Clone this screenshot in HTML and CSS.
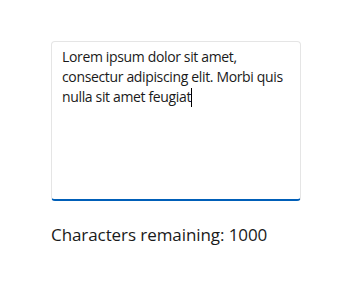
FILE: index.html
```html
<!DOCTYPE html>
<html lang="en">
	<head>
		<meta charset="UTF-8">
		<title>Text box</title>
		<link rel="stylesheet" href="styles.css">
	</head>
	<body>
		<div class="field">
			<div class="text-box">
				<div class="text-content">Lorem ipsum dolor sit amet, consectur adipiscing elit. Morbi quis nulla sit amet feugiat<span class="caret"></span></div>
			</div>
			<div class="counter">Characters remaining: 1000</div>
		</div>
	</body>
</html>
```

FILE: styles.css
```css
body {
	margin: 0;
	background-color: #ffffff;
	font-family: 'Open Sans', 'Noto Sans', sans-serif;
	color: #1a1a1a;
}

.field {
	padding: 41px 0 0 51px;
}

.text-box {
	width: 250px;
	height: 160px;
	box-sizing: border-box;
	border: 1px solid #e5e5e5;
	border-bottom: 2px solid #005fb8;
	border-radius: 4px;
	background-color: #ffffff;
	padding: 5px 10px;
}

.text-content {
	font-size: 14px;
	line-height: 20px;
	letter-spacing: -0.35px;
	color: #1a1a1a;
}

.caret {
	display: inline-block;
	width: 1px;
	height: 19px;
	background-color: #000000;
	vertical-align: -5px;
}

.counter {
	margin-top: 22px;
	font-size: 17px;
	letter-spacing: -0.08px;
	color: #1a1a1a;
}
```
